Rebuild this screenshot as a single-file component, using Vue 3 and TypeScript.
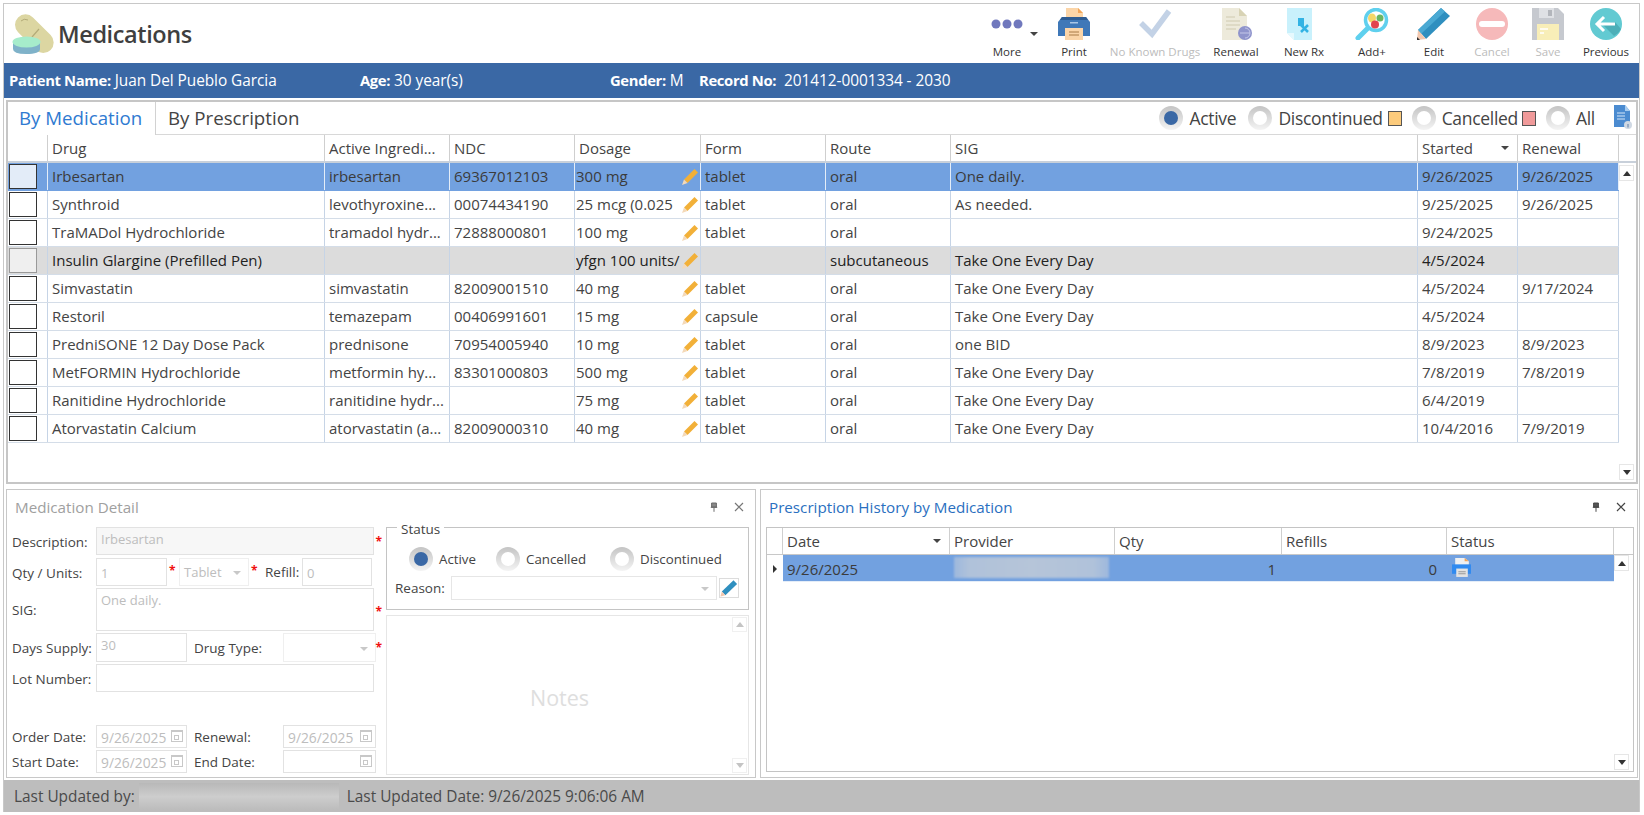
<script setup lang="ts">
interface Row { drug: string; ing: string; ndc: string; dose: string; form: string; route: string; sig: string; started: string; renewal: string; cls?: string }
const rows: Row[] = [
  { drug: 'Irbesartan', ing: 'irbesartan', ndc: '69367012103', dose: '300 mg', form: 'tablet', route: 'oral', sig: 'One daily.', started: '9/26/2025', renewal: '9/26/2025', cls: 'sel' },
  { drug: 'Synthroid', ing: 'levothyroxine...', ndc: '00074434190', dose: '25 mcg (0.025', form: 'tablet', route: 'oral', sig: 'As needed.', started: '9/25/2025', renewal: '9/26/2025' },
  { drug: 'TraMADol Hydrochloride', ing: 'tramadol hydr...', ndc: '72888000801', dose: '100 mg', form: 'tablet', route: 'oral', sig: '', started: '9/24/2025', renewal: '' },
  { drug: 'Insulin Glargine (Prefilled Pen)', ing: '', ndc: '', dose: 'yfgn 100 units/', form: '', route: 'subcutaneous', sig: 'Take One Every Day', started: '4/5/2024', renewal: '', cls: 'gray' },
  { drug: 'Simvastatin', ing: 'simvastatin', ndc: '82009001510', dose: '40 mg', form: 'tablet', route: 'oral', sig: 'Take One Every Day', started: '4/5/2024', renewal: '9/17/2024' },
  { drug: 'Restoril', ing: 'temazepam', ndc: '00406991601', dose: '15 mg', form: 'capsule', route: 'oral', sig: 'Take One Every Day', started: '4/5/2024', renewal: '' },
  { drug: 'PredniSONE 12 Day Dose Pack', ing: 'prednisone', ndc: '70954005940', dose: '10 mg', form: 'tablet', route: 'oral', sig: 'one BID', started: '8/9/2023', renewal: '8/9/2023' },
  { drug: 'MetFORMIN Hydrochloride', ing: 'metformin hy...', ndc: '83301000803', dose: '500 mg', form: 'tablet', route: 'oral', sig: 'Take One Every Day', started: '7/8/2019', renewal: '7/8/2019' },
  { drug: 'Ranitidine Hydrochloride', ing: 'ranitidine hydr...', ndc: '', dose: '75 mg', form: 'tablet', route: 'oral', sig: 'Take One Every Day', started: '6/4/2019', renewal: '' },
  { drug: 'Atorvastatin Calcium', ing: 'atorvastatin (a...', ndc: '82009000310', dose: '40 mg', form: 'tablet', route: 'oral', sig: 'Take One Every Day', started: '10/4/2016', renewal: '7/9/2019' },
]
const heads = ['Drug', 'Active Ingredi...', 'NDC', 'Dosage', 'Form', 'Route', 'SIG']
</script>

<template>
  <div class="frame">
    <header class="titlebar">
      <svg class="logo" viewBox="0 0 42 40" width="42" height="40">
        <rect x="-1" y="9" width="46" height="21" rx="10.5" fill="#dcd6a2" transform="rotate(45 22 20)" />
        <path d="M20 23 L27 15" stroke="#b3ab78" stroke-width="1.2" />
        <path d="M9 7 Q12 4 16 6" stroke="#b3ab78" stroke-width="1" fill="none" />
        <path d="M1 28 V35 Q1 40 14 40 Q28 40 28 35 V28Z" fill="#7fb2c9" />
        <ellipse cx="14.500" cy="28" rx="14" ry="5.500" fill="#a6eccb" />
      </svg>
      <h1 class="title">Medications</h1>
      <nav class="toolbar">
        <div class="tool t72">
          <svg class="more" viewBox="0 0 48 32" width="48" height="32">
            <circle cx="5" cy="16" r="4.500" fill="#7078bd" /><circle cx="16" cy="16" r="4.500" fill="#7078bd" /><circle cx="27" cy="16" r="4.500" fill="#7078bd" />
            <path d="M39 24h8l-4 4z" fill="#444" />
          </svg>
          <span>More</span>
        </div>
        <div class="tool t62">
          <svg viewBox="0 0 34 32" width="34" height="32">
            <path d="M9 0h12l5 5v8H9z" fill="#fbd5a8" />
            <path d="M21 0l5 5h-5z" fill="#f2a65a" />
            <path d="M5 9h24l4 5v14H1V14z" fill="#3f78b8" />
            <path d="M5 9h24l2 3H3z" fill="#2f5d93" />
            <rect x="13" y="14" width="8" height="1.500" fill="#a9c6e6" />
            <path d="M8 20h18v12H8z" fill="#fbd5a8" />
            <path d="M12 24h10M12 27h10" stroke="#a87a46" stroke-width="1" />
          </svg>
          <span>Print</span>
        </div>
        <div class="tool t100 off">
          <svg viewBox="0 0 34 32" width="34" height="32"><path d="M3 15 L14 26 L31 3" fill="none" stroke="#c3d2e6" stroke-width="5.500" /></svg>
          <span>No Known Drugs</span>
        </div>
        <div class="tool t62">
          <svg viewBox="0 0 34 32" width="34" height="32">
            <path d="M3 0h17l8 8v24H3z" fill="#edeadb" />
            <path d="M20 0l8 8h-8z" fill="#d8d3b5" />
            <path d="M7 9h9M7 13h14M7 17h14M7 21h10" stroke="#cfcab0" stroke-width="1" />
            <circle cx="26" cy="25" r="7" fill="#8f94cc" />
            <path d="M21 25h10M26 20a5 5 0 0 1 0 10" stroke="#c4c7e8" stroke-width="1" fill="none" />
          </svg>
          <span>Renewal</span>
        </div>
        <div class="tool t74">
          <svg class="rx" viewBox="0 0 26 32" width="26" height="32">
            <path d="M0 0h25v32H7l-7-7z" fill="#c9f1fc" />
            <path d="M0 25l7 0v7z" fill="#e6f9fe" />
            <rect x="11" y="10" width="6" height="8" fill="#33b3e4" />
            <path d="M14 17l7 7M21 17l-7 7" stroke="#33b3e4" stroke-width="2.500" />
          </svg>
          <span>New Rx</span>
        </div>
        <div class="tool t62">
          <svg viewBox="0 0 34 32" width="34" height="32">
            <path d="M3 30 L13 20" stroke="#5fd0ee" stroke-width="5" stroke-linecap="round" />
            <circle cx="21" cy="12" r="10.500" fill="#fff" stroke="#5fd0ee" stroke-width="3.500" />
            <ellipse cx="17" cy="10" rx="4" ry="4.500" fill="#f5d76a" />
            <circle cx="25" cy="10" r="3.500" fill="#6ab664" />
            <circle cx="20" cy="16.500" r="4" fill="#e2454f" />
          </svg>
          <span>Add+</span>
        </div>
        <div class="tool t62">
          <svg viewBox="0 0 34 32" width="34" height="32">
            <path d="M24 0 L33 8 L9 31 L1 22z" fill="#2f8fbf" />
            <path d="M24 0 L28 3.500 L4 26 L1 22z" fill="#4aa9d3" />
            <path d="M1 22 L9 31 L0 32z" fill="#f2c7ae" />
            <path d="M0 29 L3 32 H0z" fill="#333" />
          </svg>
          <span>Edit</span>
        </div>
        <div class="tool t54 off">
          <svg viewBox="0 0 32 32" width="32" height="32">
            <circle cx="16" cy="16" r="16" fill="#f6b9ba" />
            <rect x="3" y="13" width="26" height="6" rx="3" fill="#fff" />
          </svg>
          <span>Cancel</span>
        </div>
        <div class="tool t58 off">
          <svg viewBox="0 0 32 32" width="32" height="32">
            <path d="M0 0h26l6 6v26H0z" fill="#c6c9cf" />
            <rect x="7" y="0" width="15" height="10" fill="#dfe1e5" />
            <rect x="16" y="2" width="4" height="6" fill="#b3b6bc" />
            <rect x="5" y="16" width="22" height="16" fill="#f8eeb8" />
            <path d="M8 21h8M8 25h4" stroke="#fff" stroke-width="1.500" />
          </svg>
          <span>Save</span>
        </div>
        <div class="tool t58">
          <svg viewBox="0 0 32 32" width="32" height="32">
            <circle cx="16" cy="16" r="16" fill="#62cad2" />
            <path d="M12 16 L24 28 A16 16 0 0 0 31 21 L25 14z" fill="#4cafb8" />
            <path d="M14 9 L7 16 L14 23 M8 16 H25" fill="none" stroke="#fff" stroke-width="3" />
          </svg>
          <span>Previous</span>
        </div>
      </nav>
    </header>

    <div class="patient">
      <span class="p1"><b>Patient Name:</b> Juan Del Pueblo Garcia</span>
      <span class="p2"><b>Age:</b> 30 year(s)</span>
      <span class="p3"><b>Gender:</b> M</span>
      <span class="p4"><b>Record No:</b>&nbsp; 201412-0001334 - 2030</span>
    </div>

    <section class="main">
      <div class="tabs">
        <div class="tab active">By Medication</div>
        <div class="tab">By Prescription</div>
        <div class="filters">
          <i class="radio on"></i><span class="flabel fa">Active</span>
          <i class="radio"></i><span class="flabel fd">Discontinued</span><i class="swatch orange"></i>
          <i class="radio"></i><span class="flabel fc">Cancelled</span><i class="swatch red"></i>
          <i class="radio"></i><span class="flabel fl">All</span>
          <svg class="infodoc" viewBox="0 0 19 24" width="19" height="24">
            <path d="M1 0h11l5 6v16H1z" fill="#4b8bd0" />
            <path d="M12 0l5 6h-5z" fill="#a9cdf0" />
            <path d="M4 8h8M4 11h8M4 14h8" stroke="#d5e6f8" stroke-width="1" />
            <circle cx="15" cy="20" r="4" fill="#cfd8e3" />
            <rect x="14.500" y="19" width="1" height="3.500" fill="#5e7fa8" />
          </svg>
        </div>
      </div>
      <div class="grid-head cols">
        <div class="hc"></div>
        <div v-for="h in heads" :key="h" class="hc">{{ h }}</div>
        <div class="hc sorted">Started<em class="tri"></em></div>
        <div class="hc">Renewal</div>
        <div class="hc last"></div>
      </div>
      <div class="grid-body">
        <div class="rows">
          <div v-for="r in rows" :key="r.drug" class="row cols-body" :class="r.cls">
            <div class="c chk"><i class="box"></i></div>
            <div class="c">{{ r.drug }}</div>
            <div class="c">{{ r.ing }}</div>
            <div class="c">{{ r.ndc }}</div>
            <div class="c dose">
              <span class="dosetext">{{ r.dose }}</span>
              <svg viewBox="0 0 16 16" width="16" height="16">
                <path d="M12.500 0 L16 3.500 L5.500 14 L2 10.500z" fill="#f2b038" />
                <path d="M2 10.500 L5.500 14 L0 16z" fill="#f4d9b8" />
              </svg>
            </div>
            <div class="c">{{ r.form }}</div>
            <div class="c">{{ r.route }}</div>
            <div class="c">{{ r.sig }}</div>
            <div class="c">{{ r.started }}</div>
            <div class="c">{{ r.renewal }}</div>
          </div>
        </div>
        <div class="scroll">
          <div class="sbtn"><em class="up"></em></div>
          <div class="sbtn"><em class="down"></em></div>
        </div>
      </div>
    </section>

    <div class="panels">
      <section class="panel detail">
        <div class="ptitle muted">Medication Detail
          <span class="pin"><svg viewBox="0 0 10 12" width="8" height="10"><path d="M2 1h6v5H2zM1 6.500h8M5 7v5" stroke="#666" stroke-width="1.200" fill="#888" /></svg></span>
          <span class="close"><svg viewBox="0 0 10 10" width="10" height="10"><path d="M1 1l8 8M9 1l-8 8" stroke="#777" stroke-width="1.200" /></svg></span>
        </div>
        <div class="detail-body">
          <div class="form">
            <div class="fr h28 mb3">
              <label class="lab">Description:</label>
              <div class="f fill wgray t0">Irbesartan</div><em class="star">*</em>
            </div>
            <div class="fr h28 mb2">
              <label class="lab">Qty / Units:</label>
              <div class="f w71 pad4">1</div><em class="star s1">*</em>
              <div class="f w70 sel2">Tablet<i class="caret"></i></div><em class="star s2">*</em>
              <label class="lab2 w36">Refill:</label>
              <div class="f w70 pad4">0</div>
            </div>
            <div class="fr h43 mb2">
              <label class="lab">SIG:</label>
              <div class="f fill t0">One daily.</div><em class="star s3">*</em>
            </div>
            <div class="fr h29 mb2">
              <label class="lab">Days Supply:</label>
              <div class="f w91 t0">30</div>
              <label class="lab2 w96">Drug Type:</label>
              <div class="f w92 sel2"><i class="caret"></i></div><em class="star">*</em>
            </div>
            <div class="fr h28 mb33">
              <label class="lab">Lot Number:</label>
              <div class="f fill"></div>
            </div>
            <div class="fr h23 mb2">
              <label class="lab">Order Date:</label>
              <div class="f w91 date">9/26/2025<i class="cal"></i></div>
              <label class="lab2 w96">Renewal:</label>
              <div class="f w92 date">9/26/2025<i class="cal"></i></div>
            </div>
            <div class="fr h23">
              <label class="lab">Start Date:</label>
              <div class="f w91 date">9/26/2025<i class="cal"></i></div>
              <label class="lab2 w96">End Date:</label>
              <div class="f w92 date"><i class="cal"></i></div>
            </div>
          </div>
          <div class="side">
            <div class="status">
              <span class="legend">Status</span>
              <div class="srow">
                <i class="radio on"></i><span class="sl w59">Active</span>
                <i class="radio"></i><span class="sl w89">Cancelled</span>
                <i class="radio"></i><span class="sl">Discontinued</span>
              </div>
              <div class="rrow">
                <label class="rlab">Reason:</label>
                <div class="f rsel"><i class="caret"></i></div>
                <div class="pbtn">
                  <svg viewBox="0 0 20 20" width="20" height="20">
                    <path d="M15 1.500 L19 5.500 L6 18 L2 14z" fill="#2f8fbf" />
                    <path d="M2 14 L6 18 L0.500 19.500z" fill="#f2c7ae" />
                  </svg>
                </div>
              </div>
            </div>
            <div class="notes">
              <span>Notes</span>
              <div class="nscroll">
                <div class="nbtn"><em class="up lt"></em></div>
                <div class="nbtn"><em class="down lt"></em></div>
              </div>
            </div>
          </div>
        </div>
      </section>

      <section class="panel history">
        <div class="ptitle blue">Prescription History by Medication
          <span class="pin"><svg viewBox="0 0 10 12" width="8" height="10"><path d="M2 1h6v5H2zM1 6.500h8M5 7v5" stroke="#444" stroke-width="1.200" fill="#555" /></svg></span>
          <span class="close"><svg viewBox="0 0 10 10" width="10" height="10"><path d="M1 1l8 8M9 1l-8 8" stroke="#444" stroke-width="1.200" /></svg></span>
        </div>
        <div class="hgrid">
          <div class="hhead hcols">
            <div class="hc"></div>
            <div class="hc sorted">Date<em class="tri"></em></div>
            <div class="hc">Provider</div>
            <div class="hc">Qty</div>
            <div class="hc">Refills</div>
            <div class="hc">Status</div>
            <div class="hc last"></div>
          </div>
          <div class="hbody">
            <div class="hrows">
              <div class="hrow">
                <div class="arrow"><em></em></div>
                <div class="hcell">9/26/2025</div>
                <div class="hcell blurcell"><i class="blur"></i></div>
                <div class="hcell right">1</div>
                <div class="hcell right r0">0</div>
                <div class="hcell stat">
                  <svg viewBox="0 0 20 18" width="21" height="19">
                    <path d="M4 0h9l4 3v6H4z" fill="#eef0f2" />
                    <path d="M13 0l4 3h-4z" fill="#f2a65a" />
                    <path d="M1 6h18v9H1z" fill="#2f8af0" />
                    <rect x="5" y="10" width="11" height="8" fill="#e3e3e3" />
                    <path d="M7 13h7M7 15h7" stroke="#999" stroke-width="1" />
                  </svg>
                </div>
              </div>
            </div>
            <div class="scroll thin">
              <div class="sbtn"><em class="up"></em></div>
              <div class="sbtn"><em class="down"></em></div>
            </div>
          </div>
        </div>
      </section>
    </div>

    <footer class="statusbar">
      <span>Last Updated by:</span>
      <i class="blur2"></i>
      <span>Last Updated Date: 9/26/2025 9:06:06 AM</span>
    </footer>
  </div>
</template>

<style>
html, body { margin: 0; background: #fff; }
</style>

<style scoped>
* { box-sizing: border-box; }
.frame {
  width: 1637px; height: 809px; margin: 3px 0 0 3px;
  border: 1px solid #c8c8c8; border-bottom: 0;
  display: flex; flex-direction: column;
  font-family: "Open Sans", "Noto Sans", sans-serif; font-size: 15px; color: #444;
}
i, em { font-style: normal; display: block; }
.titlebar { height: 59px; display: flex; align-items: flex-start; flex: none; }
.logo { margin: 10px 0 0 8px; flex: none; }
.title { margin: 15px 0 0 4px; font-size: 23.500px; line-height: 30px; font-weight: 600; color: #3f3f3f; letter-spacing: -0.4px; }
.toolbar { margin-left: auto; display: flex; padding-right: 4px; }
.tool { display: flex; flex-direction: column; align-items: center; height: 59px; padding-top: 4px; font-size: 11.500px; line-height: 14px; color: #333; flex: none; white-space: nowrap; }
.tool svg { height: 32px; flex: none; margin-bottom: 5px; }
.tool svg.more { margin-left: 16px; }
.tool svg.rx { margin-left: -8px; }
.tool.off { color: #bcbcbc; }
.t72 { width: 72px; } .t62 { width: 62px; } .t100 { width: 100px; } .t74 { width: 74px; }
.t54 { width: 54px; } .t58 { width: 58px; }

.patient { height: 35px; background: #3a68a5; color: #fff; display: flex; align-items: center; font-size: 15.400px; flex: none; letter-spacing: -0.05px; }
.patient b { font-weight: 700; font-size: 14.800px; letter-spacing: -0.35px; }
.p1 { margin-left: 5px; width: 351px; white-space: nowrap; }
.p2 { width: 250px; white-space: nowrap; }
.p3 { width: 89px; white-space: nowrap; }

.main { height: 384px; margin: 2px 1px 0 2px; border: 2px solid #c6c6c6; flex: none; display: flex; flex-direction: column; }
.tabs { height: 32px; display: flex; align-items: stretch; flex: none; font-size: 18.700px; }
.tab { padding: 0 12px; line-height: 32px; color: #444; }
.tab.active { color: #2f7ad1; border-right: 1px solid #d2d2d2; width: 148px; padding: 0 0 0 11px; margin-bottom: -1px; background: #fff; position: relative; }
.filters { margin-left: auto; display: flex; align-items: center; font-size: 17.500px; letter-spacing: -0.3px; }
.flabel { margin-left: 6px; white-space: nowrap; }
.fa { width: 59px; }
.fd { margin-right: 5px; }
.fc { margin-right: 4px; }
.swatch { width: 14px; height: 15px; border: 1px solid #555; margin-right: 10px; }
.orange { background: #fccb7c; }
.red { background: #f09a9a; }
.infodoc { margin: -2px 4px 0 18px; }
.radio { width: 24px; height: 24px; border-radius: 50%; background: linear-gradient(#c4c4c4, #f4f4f4); display: flex; align-items: center; justify-content: center; flex: none; }
.radio::after { content: ""; width: 14px; height: 14px; border-radius: 50%; background: #fff; }
.radio.on::after { background: #3a68a5; }

.cols-body { display: grid; grid-template-columns: 40px 277px 125px 125px 126px 125px 125px 467px 100px 101px; }
.cols { display: grid; grid-template-columns: 40px 277px 125px 125px 126px 125px 125px 467px 100px 101px 1fr; }
.grid-head { height: 29px; border-top: 1px solid #d8d8d8; border-bottom: 2px solid #c8d0da; flex: none; }
.hc { border-right: 1px solid #cfcfcf; padding-left: 4px; line-height: 26px; font-size: 15px; color: #444; white-space: nowrap; position: relative; }
.hc.last { border-right: 0; }
.tri { position: absolute; right: 8px; top: 11px; width: 0; height: 0; border-left: 4px solid transparent; border-right: 4px solid transparent; border-top: 4px solid #444; }
.grid-body { flex: 1; display: flex; min-height: 0; }
.rows { flex: none; width: 1611px; }
.row { height: 28px; border-bottom: 1px solid #d4dde8; }
.c { border-right: 1px solid #c6d4e6; padding-left: 4px; line-height: 27px; white-space: nowrap; overflow: hidden; font-size: 15px; }
.row.sel { background: #72a1e0; color: #3b3b3b; border-bottom-color: #72a1e0; }
.row.sel .c { border-right-color: #e4edf8; }
.row.gray { background: #dcdcdc; color: #222; }
.chk { padding: 1px 0 0 1px; }
.box { width: 28px; height: 25px; border: 1px solid #333; background: #fff; }
.row.sel .box { background: #e3ecf8; }
.row.gray .box { background: #efefef; border-color: #999; }
.dose { display: flex; align-items: center; padding-right: 2px; padding-left: 1px; }
.dosetext { flex: 1; overflow: hidden; }
.scroll { flex: 1; display: flex; flex-direction: column; justify-content: space-between; padding: 2px 2px 2px 0; }
.sbtn { height: 16px; border: 1px solid #e6e6e6; display: flex; align-items: center; justify-content: center; background: #fff; }
.up { width: 0; height: 0; border-left: 4px solid transparent; border-right: 4px solid transparent; border-bottom: 5px solid #333; }
.down { width: 0; height: 0; border-left: 4px solid transparent; border-right: 4px solid transparent; border-top: 5px solid #333; }
.up.lt { border-bottom-color: #c4c4c4; }
.down.lt { border-top-color: #c4c4c4; }

.panels { display: flex; gap: 4px; margin: 5px 1px 0 2px; height: 289px; flex: none; }
.panel { border: 1px solid #c8c8c8; display: flex; flex-direction: column; }
.detail { width: 750px; flex: none; }
.history { flex: 1; min-width: 0; }
.ptitle { height: 37px; flex: none; padding-left: 8px; line-height: 34px; font-size: 15.200px; position: relative; }
.muted { color: #a0a0a0; }
.blue { color: #2a6fc0; }
.pin { position: absolute; right: 37px; top: 12px; line-height: 0; }
.close { position: absolute; right: 11px; top: 12px; line-height: 0; }
.detail-body { flex: 1; display: flex; padding-left: 5px; }
.form { width: 374px; flex: none; }
.fr { display: flex; position: relative; width: 362px; font-size: 13.500px; color: #444; align-items: center; }
.h28 { height: 28px; } .h43 { height: 43px; } .h29 { height: 29px; } .h23 { height: 23px; }
.mb2 { margin-bottom: 2px; } .mb3 { margin-bottom: 3px; } .mb33 { margin-bottom: 33px; }
.lab { width: 84px; flex: none; white-space: nowrap; padding-top: 1px; }
.lab2 { flex: none; white-space: nowrap; }
.w36 { width: 37px; margin-left: 8px; }
.w96 { width: 96px; margin-left: 7px; margin-right: -7px; }
.f { height: 100%; border: 1px solid #e2e2e2; color: #bdbdbd; padding-left: 4px; font-size: 13px; background: #fff; position: relative; white-space: nowrap; display: flex; align-items: center; }
.fill { flex: 1; }
.t0 { align-items: flex-start; padding-top: 2px; }
.wgray { background: #f7f7f7; }
.w70 { width: 70px; flex: none; }
.w71 { width: 71px; flex: none; }
.w91 { width: 91px; flex: none; }
.w92 { width: 93px; flex: none; margin-left: 0; }
.pad4 { padding-top: 2px; }
.sel2 { border-color: #efefef; }
.date { font-size: 13.800px; padding-top: 1px; }
.caret { position: absolute; right: 7px; top: 50%; margin-top: -1px; width: 0; height: 0; border-left: 4px solid transparent; border-right: 4px solid transparent; border-top: 4px solid #c8c8c8; }
.star { position: absolute; right: -8px; top: 8px; color: #f01010; font-size: 12px; font-weight: 700; line-height: 14px; }
.s1 { position: static; margin: -2px 4px 0 2px; width: 6px; }
.s2 { position: static; margin: -2px 0 0 2px; width: 6px; }
.s3 { top: 17px; }
.cal { position: absolute; right: 3px; top: 4px; width: 12px; height: 12px; border: 1px solid #c8c8c8; border-top-width: 2px; }
.cal::after { content: ""; position: absolute; left: 2px; top: 3px; width: 3px; height: 3px; border: 1px solid #c8c8c8; }
.side { width: 363px; flex: none; display: flex; flex-direction: column; gap: 5px; padding-bottom: 2px; }
.status { height: 83px; border: 1px solid #c4c4c4; position: relative; flex: none; }
.legend { position: absolute; left: 10px; top: -8px; background: #fff; padding: 0 4px; font-size: 13.500px; color: #444; line-height: 18px; }
.srow { display: flex; align-items: center; margin: 18px 0 0 22px; height: 25px; font-size: 13.300px; }
.sl { margin-left: 6px; white-space: nowrap; }
.w59 { width: 57px; } .w89 { width: 84px; }
.rrow { display: flex; align-items: center; margin: 5px 0 0 8px; height: 24px; font-size: 13.500px; }
.rlab { width: 56px; flex: none; }
.rsel { width: 266px; border-color: #e6e6e6; }
.pbtn { width: 20px; height: 20px; border: 1px solid #dcdcdc; margin-left: 2px; line-height: 0; }
.pbtn svg { width: 18px; height: 18px; }
.notes { flex: 1; border: 1px solid #e6e6e6; position: relative; display: flex; align-items: center; justify-content: center; color: #dedede; font-size: 21.500px; padding: 4px 16px 0 0; }
.nscroll { position: absolute; right: 1px; top: 1px; bottom: 1px; width: 15px; display: flex; flex-direction: column; justify-content: space-between; }
.nbtn { height: 15px; border: 1px solid #f0f0f0; display: flex; align-items: center; justify-content: center; }

.hgrid { margin: 0 3px 5px 5px; flex: 1; border: 1px solid #c4c4c4; display: flex; flex-direction: column; min-height: 0; }
.hcols { display: grid; grid-template-columns: 16px 167px 165px 167px 165px 167px 1fr; }
.hhead { height: 27px; border-bottom: 1px solid #c8c8c8; flex: none; }
.hbody { flex: 1; display: flex; min-height: 0; }
.hrows { width: 847px; flex: none; }
.hrow { height: 27px; display: grid; grid-template-columns: 16px 167px 165px 167px 165px 167px; background: #72a1e0; color: #3b3b3b; font-size: 15px; line-height: 28px; border-bottom: 1px solid #e4edf8; }
.arrow { background: #fff; display: flex; align-items: center; justify-content: center; }
.arrow em { width: 0; height: 0; border-top: 4px solid transparent; border-bottom: 4px solid transparent; border-left: 4px solid #333; }
.hcell { padding-left: 4px; white-space: nowrap; }
.right { text-align: right; padding-right: 6px; }
.r0 { padding-right: 10px; }
.blurcell { padding: 2px 4px; }
.blur { height: 21px; width: 155px; background: linear-gradient(90deg, #9db8dd, #b0c2da 10%, #b6c5d9 50%, #b0c2da 90%, #9db8dd); filter: blur(1px); }
.stat { padding: 3px 0 0 4px; line-height: 0; }
.scroll.thin { padding: 0 4px 1px 0; }

.statusbar { height: 32px; margin-top: 2px; background: #bdbdbd; display: flex; align-items: center; flex: none; font-size: 15.400px; padding-left: 10px; color: #4a4a4a; }
.blur2 { width: 200px; height: 27px; margin: 0 8px 0 4px; background: linear-gradient(#b8b8b8, #cdcdcd 50%, #bcbcbc); }
</style>
